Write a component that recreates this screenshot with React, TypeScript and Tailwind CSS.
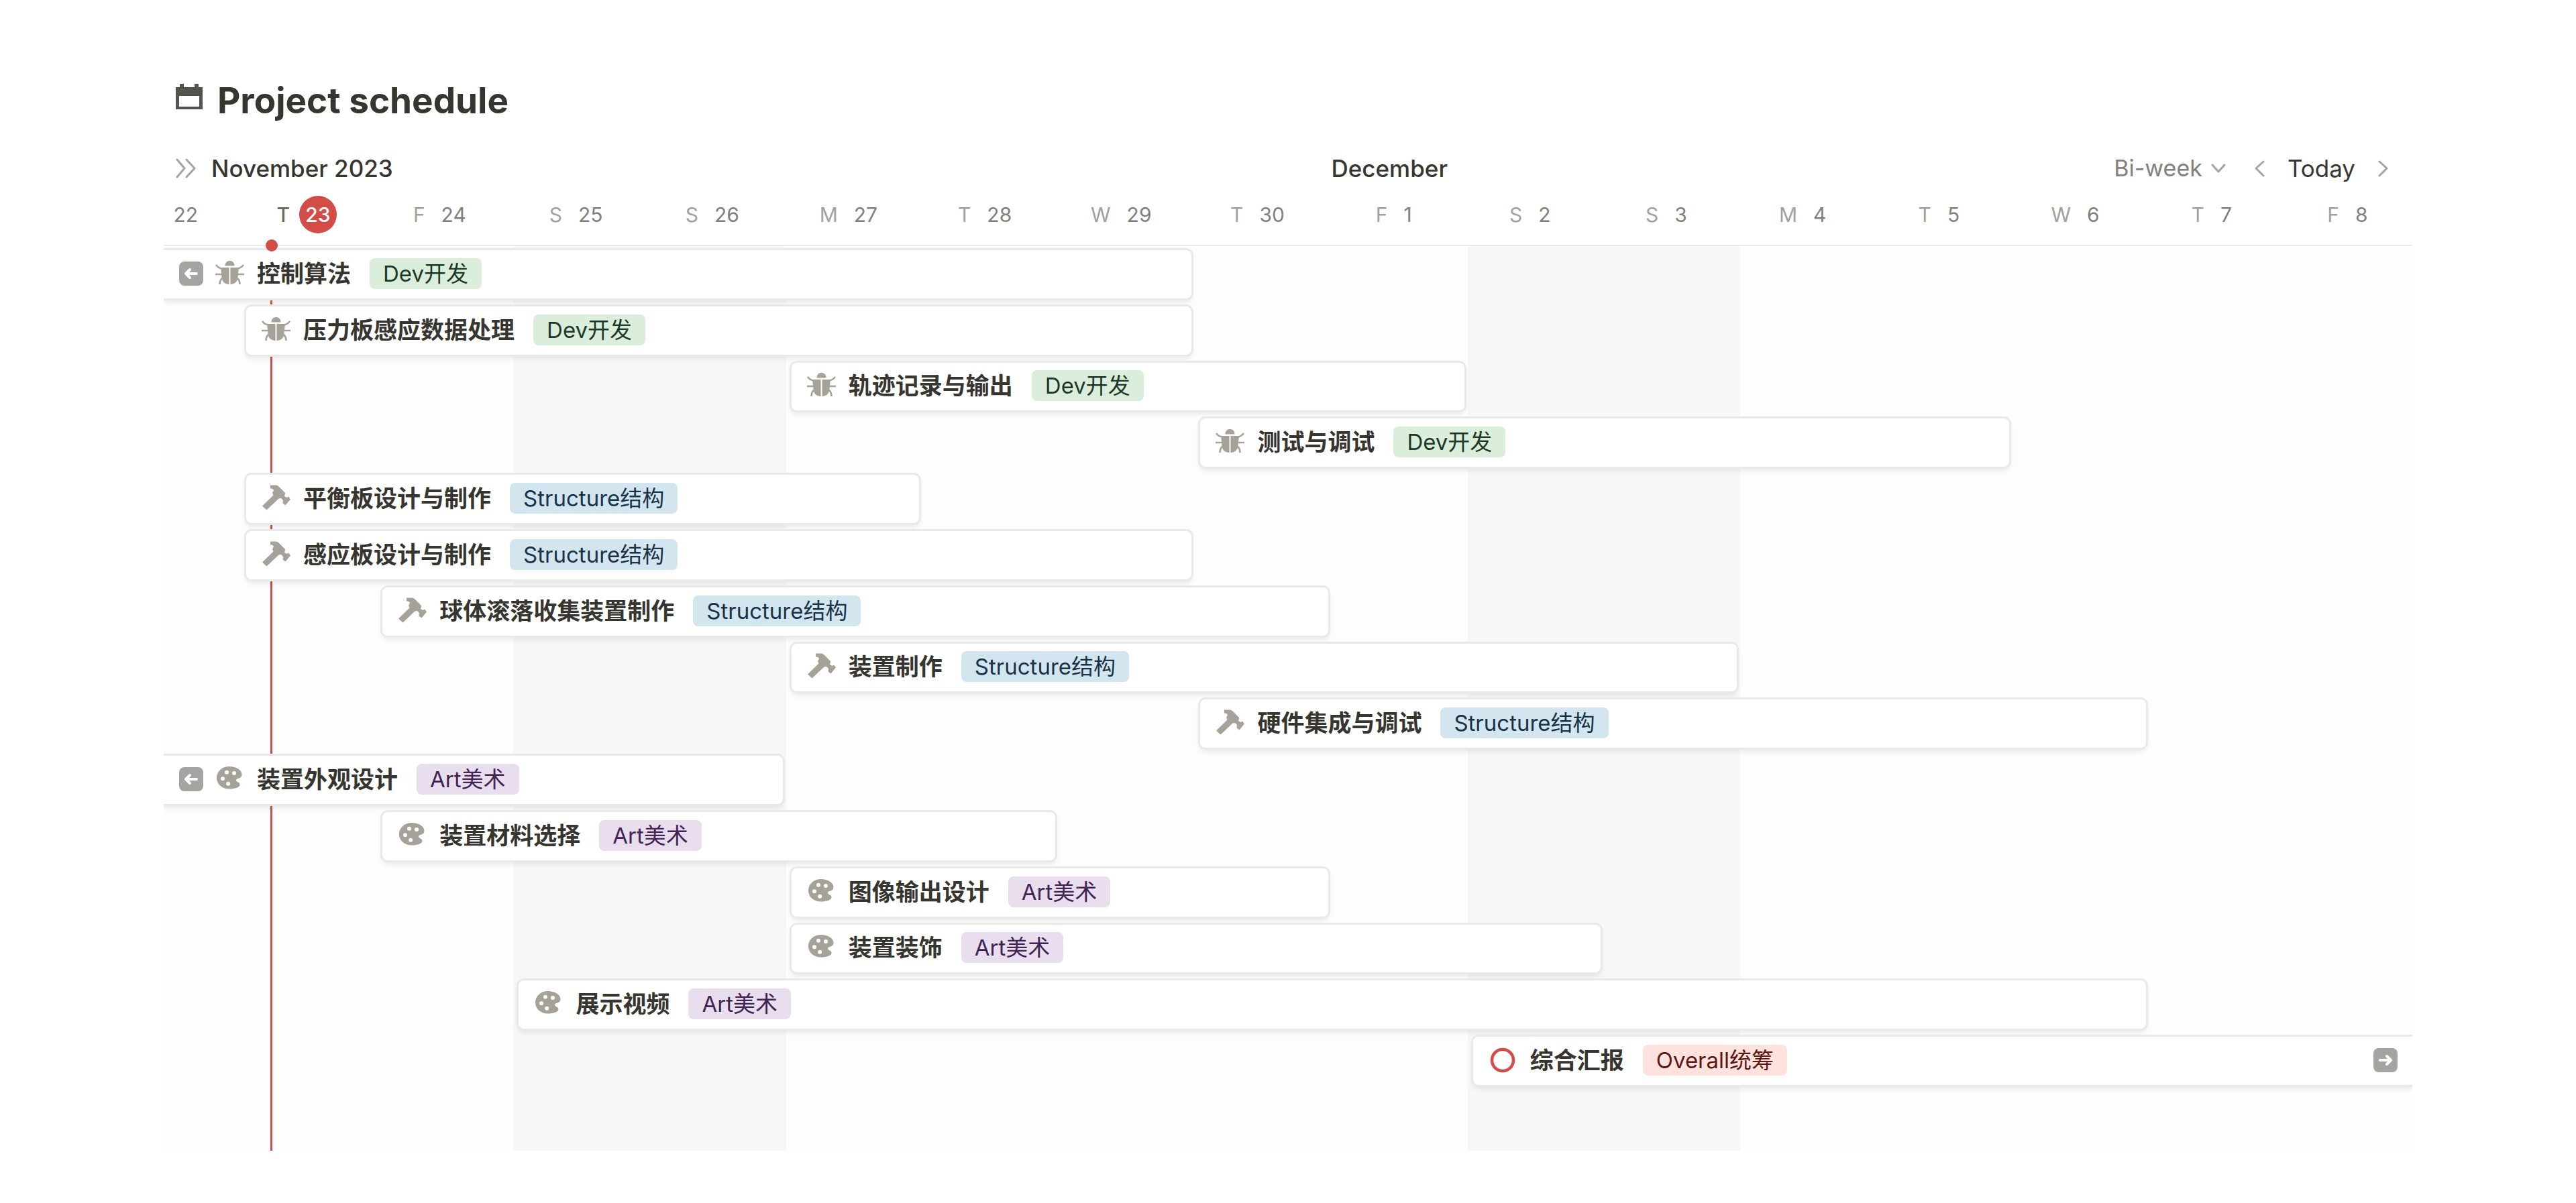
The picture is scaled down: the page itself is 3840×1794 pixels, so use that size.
import { ReactNode } from "react";

const COLS = "grid grid-cols-[115fr_repeat(15,203fr)_189fr]";

const starts = ["col-start-1", "col-start-2", "col-start-3", "col-start-4", "col-start-5", "col-start-6", "col-start-7", "col-start-8", "col-start-9", "col-start-10", "col-start-11"];
const ends: Record<number, string> = {
  6: "col-end-6",
  7: "col-end-7",
  8: "col-end-8",
  9: "col-end-9",
  10: "col-end-10",
  11: "col-end-11",
  12: "col-end-12",
  13: "col-end-13",
  15: "col-end-15",
  16: "col-end-16",
  18: "col-end-18",
};

type Kind = "dev" | "structure" | "art" | "overall";

const tagStyle: Record<Kind, string> = {
  dev: "bg-[#dbeddb] text-[#1c3829]",
  structure: "bg-[#d3e5ef] text-[#183347]",
  art: "bg-[#e8deee] text-[#412454]",
  overall: "bg-[#ffe2dd] text-[#5d1715]",
};
const tagText: Record<Kind, string> = {
  dev: "Dev开发",
  structure: "Structure结构",
  art: "Art美术",
  overall: "Overall统筹",
};

const tasks: { name: string; kind: Kind; from: number; to: number }[] = [
  { name: "控制算法", kind: "dev", from: 1, to: 9 },
  { name: "压力板感应数据处理", kind: "dev", from: 2, to: 9 },
  { name: "轨迹记录与输出", kind: "dev", from: 6, to: 11 },
  { name: "测试与调试", kind: "dev", from: 9, to: 15 },
  { name: "平衡板设计与制作", kind: "structure", from: 2, to: 7 },
  { name: "感应板设计与制作", kind: "structure", from: 2, to: 9 },
  { name: "球体滚落收集装置制作", kind: "structure", from: 3, to: 10 },
  { name: "装置制作", kind: "structure", from: 6, to: 13 },
  { name: "硬件集成与调试", kind: "structure", from: 9, to: 16 },
  { name: "装置外观设计", kind: "art", from: 1, to: 6 },
  { name: "装置材料选择", kind: "art", from: 3, to: 8 },
  { name: "图像输出设计", kind: "art", from: 6, to: 10 },
  { name: "装置装饰", kind: "art", from: 6, to: 12 },
  { name: "展示视频", kind: "art", from: 4, to: 16 },
  { name: "综合汇报", kind: "overall", from: 11, to: 18 },
];

const days: [string, string][] = [
  ["", "22"], ["T", "23"], ["F", "24"], ["S", "25"], ["S", "26"], ["M", "27"], ["T", "28"], ["W", "29"], ["T", "30"],
  ["F", "1"], ["S", "2"], ["S", "3"], ["M", "4"], ["T", "5"], ["W", "6"], ["T", "7"], ["F", "8"],
];

function BugIcon() {
  return (
    <svg viewBox="0 0 44 44" className="size-11" fill="#a6a299" aria-hidden="true">
      <path d="M15.500 10.500c0-5 3-7.500 7-7.500s7 2.500 7 7.500z" />
      <path d="M9 13h12.500v25C15 37.500 10.500 34 10.500 27z" />
      <path d="M36 13H23.500v25C30 37.500 34.500 34 34.500 27z" />
      <g fill="none" stroke="#a6a299" strokeWidth="2.600">
        <path d="M2 9c2.500 3.500 5 5 9 5.500M43 9c-2.500 3.500-5 5-9 5.500M1 23h11M44 23H33M7.500 38c0-5 1-7.500 4.500-9.500M37.500 38c0-5-1-7.500-4.500-9.500" />
      </g>
    </svg>
  );
}

function HammerIcon() {
  return (
    <svg viewBox="0 0 44 44" className="size-11" fill="#a6a299" aria-hidden="true">
      <path d="M14 2.500h7c2.500 0 4 .5 6 2.500l9 9c.5 2-1 3.500-1 5l3.500 2 2.500-1.500 3 4-7.500 9-4-3 .5-4.500-3-3-3.500.5-18 17-6.500-6L18.500 17.500 17 14l2-4c-1-2-3-2.500-5-2.500z" />
    </svg>
  );
}

function PaletteIcon() {
  return (
    <svg viewBox="0 0 44 44" className="size-11" fill="#a6a299" aria-hidden="true">
      <path
        fillRule="evenodd"
        d="M22 3C11 3 3 10.500 3 20s8 16.500 18.500 16.500c9 0 16-2.500 16-6.500s-5.500-3.500-5.500-6.500c0-4 8.500-1.500 8.500-8.500C40.500 8 32 3 22 3zM18 8.700a3 3 0 1 1 0 6 3 3 0 0 1 0-6zM29 10a3 3 0 1 1 0 6 3 3 0 0 1 0-6zM12 18.300a3 3 0 1 1 0 6 3 3 0 0 1 0-6zM20.200 25.700a3 3 0 1 1 0 6 3 3 0 0 1 0-6z"
      />
    </svg>
  );
}

function RingIcon() {
  return (
    <svg viewBox="0 0 44 44" className="size-11" fill="none" aria-hidden="true">
      <circle cx="22" cy="22" r="16" stroke="#d44c47" strokeWidth="4.500" />
    </svg>
  );
}

const icons: Record<Kind, ReactNode> = {
  dev: <BugIcon />,
  structure: <HammerIcon />,
  art: <PaletteIcon />,
  overall: <RingIcon />,
};

function JumpButton({ dir }: { dir: "left" | "right" }) {
  return (
    <button type="button" aria-label={dir === "left" ? "Scroll to start" : "Scroll to end"} className="flex size-9 items-center justify-center rounded-lg bg-[#a5a4a0]">
      <svg viewBox="0 0 36 36" className="size-9" fill="none" stroke="white" strokeWidth="4" strokeLinecap="round" strokeLinejoin="round" aria-hidden="true">
        {dir === "left" ? <path d="M26 18H10M16 12l-6 6 6 6" /> : <path d="M10 18h16M20 12l6 6-6 6" />}
      </svg>
    </button>
  );
}

function Chevron({ d, label, className }: { d: string; label: string; className: string }) {
  return (
    <button type="button" aria-label={label} className={className}>
      <svg viewBox="0 0 32 32" className="size-8" fill="none" stroke="#a5a4a0" strokeWidth="3" strokeLinecap="round" strokeLinejoin="round" aria-hidden="true">
        <path d={d} />
      </svg>
    </button>
  );
}

export default function App() {
  return (
    <main className="min-h-screen bg-white px-[244px] pt-[112px] pb-[78px] font-[Inter,'Noto_Sans_CJK_SC',sans-serif] text-[#37352f]">
      <header className="flex h-[76px] items-center pl-[18px]">
        <svg viewBox="0 0 40 40" className="mb-3 size-10" fill="#55534e" aria-hidden="true">
          <path fillRule="evenodd" d="M0 6h6V1h6v5h16V1h6v5h6v33H0zM5 19v16h30V19z" />
        </svg>
        <h1 className="ml-[22px] text-[53px] leading-[76px] font-bold">Project schedule</h1>
      </header>

      <div className={`${COLS} mt-[29px] h-[68px] items-center text-[35px] leading-[44px]`}>
        <div className="col-start-1 col-end-10 flex items-center">
          <Chevron label="Show table" className="ml-[17px]" d="M3 3l11 13L3 29M17 3l12 13-12 13" />
          <h2 className="ml-[22px] font-medium">November 2023</h2>
        </div>
        <div className="col-start-10 col-end-18 flex items-center">
          <h2 className="font-medium">December</h2>
          <div className="mr-[28px] ml-auto flex items-center">
            <button type="button" className="flex items-center gap-[12px] text-[34px] text-[#81807b]">
              Bi-week
              <svg viewBox="0 0 24 24" className="size-6" fill="none" stroke="#a5a4a0" strokeWidth="3" strokeLinecap="round" strokeLinejoin="round" aria-hidden="true">
                <path d="M3 7l9 10 9-10" />
              </svg>
            </button>
            <Chevron label="Previous" className="ml-[34px]" d="M21 6L10 16l11 11" />
            <button type="button" className="mx-[25px]">Today</button>
            <Chevron label="Next" className="" d="M11 6l11 10-11 11" />
          </div>
        </div>
      </div>

      <div className={`${COLS} h-[82px] overflow-x-clip border-b-2 border-[#e9e9e7] text-[30px] leading-[38px]`}>
        {days.map(([letter, num], i) => (
          <div key={num} className={`flex h-[70px] items-center justify-center gap-[24px] ${i === 0 ? "justify-end pr-[64px]" : i === 16 ? "pl-[4px] pr-[8px]" : "pr-[17px]"}`}>
            {letter && <span className={i === 1 ? "font-medium text-[#6b6a65]" : "text-[#a1a09b]"}>{letter}</span>}
            {i === 1 ? (
              <span className="-mx-[10px] flex size-14 items-center justify-center rounded-full bg-[#d44c47] font-medium text-white">{num}</span>
            ) : (
              <span className="text-[#81807b]">{num}</span>
            )}
          </div>
        ))}
      </div>

      <section aria-label="Timeline" className="relative overflow-x-clip bg-[#fdfdfd] pt-[6px] pb-[86px]">
        <div className={`${COLS} absolute inset-0`} aria-hidden="true">
          <div className="relative col-start-2 row-start-1">
            <div className="absolute inset-y-0 left-[44px] w-[3px] bg-[#d44c47]" />
          </div>
          <div className="col-start-4 col-end-6 row-start-1 bg-[#f7f7f7]" />
          <div className="col-start-11 col-end-13 row-start-1 bg-[#f7f7f7]" />
        </div>
        <ul className="relative grid min-h-[1257px] auto-rows-fr">
          {tasks.map((t) => {
            const openLeft = t.from === 1;
            const openRight = t.to === 18;
            return (
              <li key={t.name} className={`${COLS} pb-3`}>
                <div
                  className={`${starts[t.from - 1]} ${ends[t.to]} flex items-center bg-white pb-[2px] shadow-[0_0_0_3px_#e9e9e8,0_5px_8px_rgba(15,15,15,0.1)] ${
                    openLeft ? "pl-[23px]" : "ml-2 rounded-l-lg pl-[22px]"
                  } ${openRight ? "pr-[22px]" : "mr-[5px] rounded-r-lg"}`}
                >
                  {openLeft && (
                    <span className="mr-[17px] flex">
                      <JumpButton dir="left" />
                    </span>
                  )}
                  {icons[t.kind]}
                  <span className="ml-[19px] text-[35px] leading-[48px] font-semibold whitespace-nowrap">{t.name}</span>
                  <span className={`${tagStyle[t.kind]} ml-[28px] flex h-[46px] items-center rounded-lg px-5 text-[33px] leading-[46px] whitespace-nowrap`}>{tagText[t.kind]}</span>
                  {openRight && (
                    <span className="ml-auto flex">
                      <JumpButton dir="right" />
                    </span>
                  )}
                </div>
              </li>
            );
          })}
        </ul>
        <div className={`${COLS} pointer-events-none absolute inset-0`} aria-hidden="true">
          <div className="relative col-start-2">
            <div className="absolute -top-[10px] left-[37px] size-[18px] rounded-full bg-[#d44c47]" />
          </div>
        </div>
      </section>
    </main>
  );
}
